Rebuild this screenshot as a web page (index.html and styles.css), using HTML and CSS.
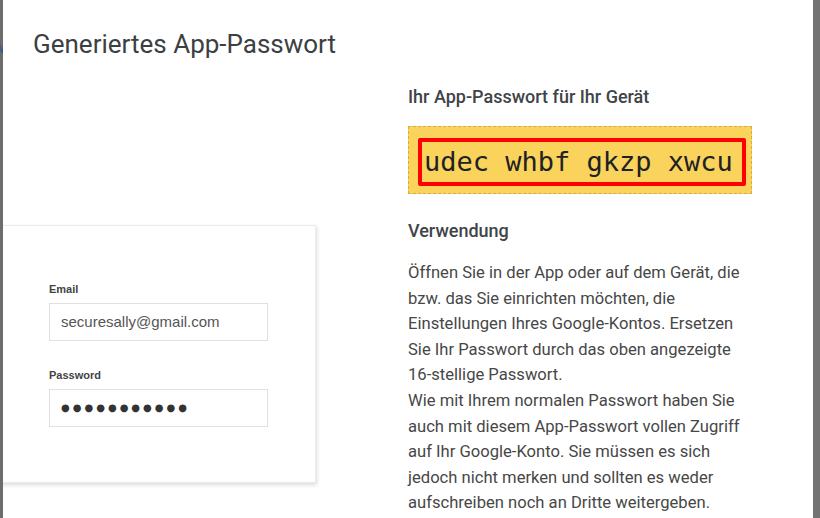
FILE: index.html
```
<!DOCTYPE html>
<html lang="de">
<head>
    <meta charset="UTF-8">
    <meta name="viewport" content="width=device-width, initial-scale=1.0">
    <title>Generiertes App-Passwort</title>
    <link rel="stylesheet" href="styles.css">
</head>
<body>

    <!-- Seite hinter dem Dialog (nur ein Streifen sichtbar) -->
    <div class="page-strip">
        <span class="strip-blue">W</span>
        <span class="strip-red">u</span>
        <span class="strip-gray">e</span>
    </div>

    <div class="dialog">
        <h1 class="dialog-title">Generiertes App-Passwort</h1>

        <div class="dialog-body">
            <div class="illustration">
                <div class="login-card">
                    <div class="field-label">Email</div>
                    <div class="field-input">securesally@gmail.com</div>
                    <div class="field-label">Password</div>
                    <div class="field-input dots">●●●●●●●●●●●</div>
                </div>
            </div>

            <div class="info">
                <h2 class="info-heading">Ihr App-Passwort für Ihr Gerät</h2>
                <div class="password-box">
                    <div class="password-frame">udec whbf gkzp xwcu</div>
                </div>

                <h2 class="info-heading usage">Verwendung</h2>
                <!-- Zeilenumbrüche wie im Original -->
                <p class="info-text">
                    Öffnen Sie in der App oder auf dem Gerät, die<br>
                    bzw. das Sie einrichten möchten, die<br>
                    Einstellungen Ihres Google-Kontos. Ersetzen<br>
                    Sie Ihr Passwort durch das oben angezeigte<br>
                    16-stellige Passwort.<br>
                    Wie mit Ihrem normalen Passwort haben Sie<br>
                    auch mit diesem App-Passwort vollen Zugriff<br>
                    auf Ihr Google-Konto. Sie müssen es sich<br>
                    jedoch nicht merken und sollten es weder<br>
                    aufschreiben noch an Dritte weitergeben.
                </p>
            </div>
        </div>
    </div>

    <div class="page-strip right"></div>

</body>
</html>
```

FILE: styles.css
```
html, body {
    margin: 0;
    height: 100%;
}
body {
    display: flex;
    background: #737373;
    font-family: Roboto, "Liberation Sans", Arial, sans-serif;
    overflow: hidden;
}
.page-strip {
    width: 3px;
    flex: none;
    overflow: hidden;
    display: flex;
    flex-direction: column;
    padding-top: 34px;
    font-size: 18px;
    line-height: 25px;
    text-indent: -10px;
    background: #6d6d6d;
}
.page-strip.right {
    width: 7px;
    padding-top: 0;
    background: #737373;
}
.strip-blue { color: #3d5a86; }
.strip-red { color: #8a2c1d; }
.strip-gray { color: #5a5a5a; }

.dialog {
    width: 750px;
    flex: none;
    background: #fff;
    padding: 28px 30px 0 30px;
    overflow: hidden;
}
.dialog-title {
    margin: 0;
    font-size: 26px;
    font-weight: 400;
    line-height: 32px;
    color: #3c4043;
}
.dialog-body {
    display: grid;
    grid-template-columns: 375px 1fr;
}
.illustration {
    padding-top: 165px;
}
.login-card {
    margin-left: -40px;
    width: 323px;
    height: 258px;
    box-sizing: border-box;
    padding: 56px 0 0 55px;
    background: #fff;
    border: 1px solid #ebebeb;
    box-shadow: 1px 2px 4px rgba(0, 0, 0, 0.14);
    font-family: "Liberation Sans", Arial, sans-serif;
}
.field-label {
    font-size: 11px;
    font-weight: bold;
    color: #444;
    line-height: 14px;
    margin-bottom: 7px;
}
.field-input {
    width: 219px;
    height: 38px;
    box-sizing: border-box;
    border: 1px solid #e0e0e0;
    padding: 0 11px;
    font-size: 15px;
    line-height: 36px;
    color: #555;
    margin-bottom: 27px;
}
.dots {
    font-size: 10px;
    letter-spacing: 3px;
    color: #333;
    font-family: "DejaVu Sans", sans-serif;
}

.info {
    padding-top: 24px;
    color: #3c4043;
}
.info-heading {
    margin: 0;
    font-size: 18px;
    font-weight: 500;
    line-height: 26px;
    color: #404448;
}
.password-box {
    margin-top: 16px;
    width: 344px;
    height: 68px;
    box-sizing: border-box;
    background: #f9d35b;
    border: 1px dashed #d9ad3c;
    padding: 11px 0 0 9px;
}
.password-frame {
    width: 328px;
    height: 48px;
    box-sizing: border-box;
    border: 4px solid #ff0000;
    border-radius: 2px;
    font-family: "DejaVu Sans Mono", "Liberation Mono", monospace;
    font-size: 27px;
    line-height: 40px;
    padding-left: 2px;
    color: #202124;
    white-space: nowrap;
}
.usage {
    margin-top: 24px;
}
.info-text {
    margin: 16px 0 0 0;
    font-size: 16.6px;
    line-height: 25.6px;
    white-space: nowrap;
    color: #474747;
}
```
